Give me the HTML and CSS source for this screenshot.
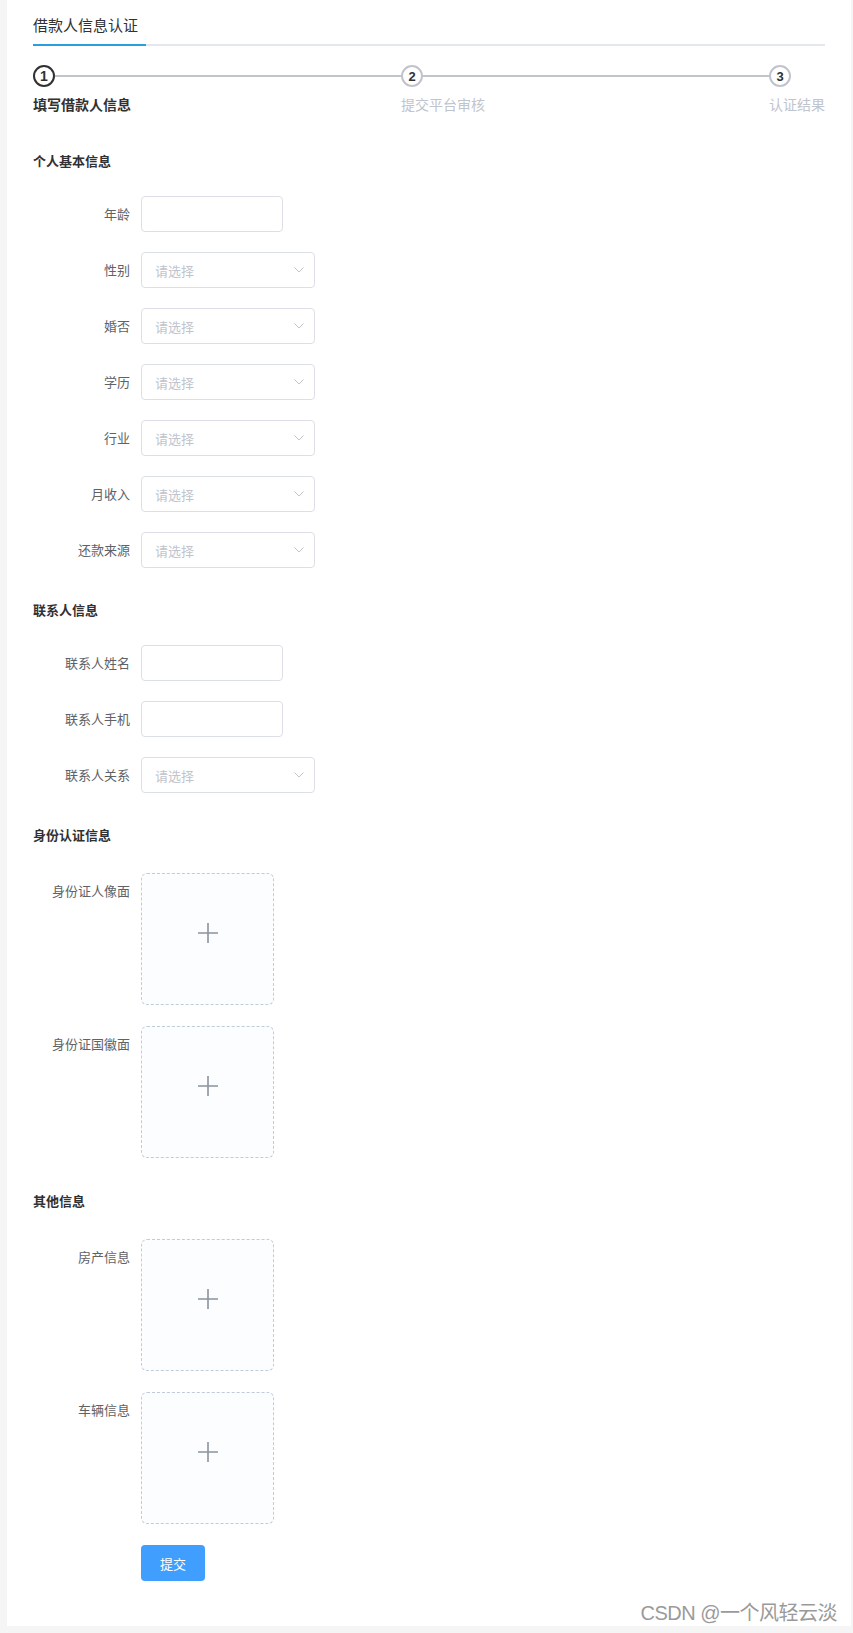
FILE: index.html
```html
<!DOCTYPE html>
<html lang="zh-CN">
<head>
  <meta charset="UTF-8">
  <meta name="viewport" content="width=device-width, initial-scale=1.0">
  <title>借款人信息认证</title>
  <link rel="stylesheet" href="styles.css">
</head>
<body>

<div class="page">
  <!-- Tabs -->
  <div class="tabs">
    <div class="tab active">借款人信息认证</div>
  </div>

  <!-- Steps -->
  <div class="steps">
    <div class="step is-process">
      <div class="step-head">
        <div class="step-icon">1</div>
        <div class="step-line"></div>
      </div>
      <div class="step-title">填写借款人信息</div>
    </div>
    <div class="step">
      <div class="step-head">
        <div class="step-icon">2</div>
        <div class="step-line"></div>
      </div>
      <div class="step-title">提交平台审核</div>
    </div>
    <div class="step">
      <div class="step-head">
        <div class="step-icon">3</div>
      </div>
      <div class="step-title">认证结果</div>
    </div>
  </div>

  <form class="form">
    <!-- 个人基本信息 -->
    <h3 class="section-title">个人基本信息</h3>
    <div class="form-item">
      <label class="form-label">年龄</label>
      <input type="text" class="input">
    </div>
    <div class="form-item">
      <label class="form-label">性别</label>
      <div class="select"><span>请选择</span><svg width="10" height="6" viewBox="0 0 10 6"><polyline points="0.5,0.5 5,5 9.5,0.5" fill="none" stroke="#c0c4cc" stroke-width="1"/></svg></div>
    </div>
    <div class="form-item">
      <label class="form-label">婚否</label>
      <div class="select"><span>请选择</span><svg width="10" height="6" viewBox="0 0 10 6"><polyline points="0.5,0.5 5,5 9.5,0.5" fill="none" stroke="#c0c4cc" stroke-width="1"/></svg></div>
    </div>
    <div class="form-item">
      <label class="form-label">学历</label>
      <div class="select"><span>请选择</span><svg width="10" height="6" viewBox="0 0 10 6"><polyline points="0.5,0.5 5,5 9.5,0.5" fill="none" stroke="#c0c4cc" stroke-width="1"/></svg></div>
    </div>
    <div class="form-item">
      <label class="form-label">行业</label>
      <div class="select"><span>请选择</span><svg width="10" height="6" viewBox="0 0 10 6"><polyline points="0.5,0.5 5,5 9.5,0.5" fill="none" stroke="#c0c4cc" stroke-width="1"/></svg></div>
    </div>
    <div class="form-item">
      <label class="form-label">月收入</label>
      <div class="select"><span>请选择</span><svg width="10" height="6" viewBox="0 0 10 6"><polyline points="0.5,0.5 5,5 9.5,0.5" fill="none" stroke="#c0c4cc" stroke-width="1"/></svg></div>
    </div>
    <div class="form-item">
      <label class="form-label">还款来源</label>
      <div class="select"><span>请选择</span><svg width="10" height="6" viewBox="0 0 10 6"><polyline points="0.5,0.5 5,5 9.5,0.5" fill="none" stroke="#c0c4cc" stroke-width="1"/></svg></div>
    </div>

    <!-- 联系人信息 -->
    <h3 class="section-title">联系人信息</h3>
    <div class="form-item">
      <label class="form-label">联系人姓名</label>
      <input type="text" class="input">
    </div>
    <div class="form-item">
      <label class="form-label">联系人手机</label>
      <input type="text" class="input">
    </div>
    <div class="form-item">
      <label class="form-label">联系人关系</label>
      <div class="select"><span>请选择</span><svg width="10" height="6" viewBox="0 0 10 6"><polyline points="0.5,0.5 5,5 9.5,0.5" fill="none" stroke="#c0c4cc" stroke-width="1"/></svg></div>
    </div>

    <!-- 身份认证信息 -->
    <h3 class="section-title">身份认证信息</h3>
    <div class="form-item upload-item">
      <label class="form-label">身份证人像面</label>
      <div class="upload"><svg width="22" height="22" viewBox="0 0 22 22"><path d="M11 1V21M1 11H21" stroke="#8c939d" stroke-width="1.6"/></svg></div>
    </div>
    <div class="form-item upload-item">
      <label class="form-label">身份证国徽面</label>
      <div class="upload"><svg width="22" height="22" viewBox="0 0 22 22"><path d="M11 1V21M1 11H21" stroke="#8c939d" stroke-width="1.6"/></svg></div>
    </div>

    <!-- 其他信息 -->
    <h3 class="section-title">其他信息</h3>
    <div class="form-item upload-item">
      <label class="form-label">房产信息</label>
      <div class="upload"><svg width="22" height="22" viewBox="0 0 22 22"><path d="M11 1V21M1 11H21" stroke="#8c939d" stroke-width="1.6"/></svg></div>
    </div>
    <div class="form-item upload-item">
      <label class="form-label">车辆信息</label>
      <div class="upload"><svg width="22" height="22" viewBox="0 0 22 22"><path d="M11 1V21M1 11H21" stroke="#8c939d" stroke-width="1.6"/></svg></div>
    </div>

    <div class="form-item">
      <span class="form-label"></span>
      <button type="button" class="btn-primary">提交</button>
    </div>
  </form>

  <div class="watermark">CSDN @一个风轻云淡</div>
</div>

</body>
</html>
```

FILE: styles.css
```css
/* General Reset */
* {
    margin: 0;
    padding: 0;
    box-sizing: border-box;
}

body {
    font-family: "Noto Sans CJK SC", "Noto Sans", sans-serif;
    background-color: #f5f5f5;
    color: #303133;
}

.page {
    position: relative;
    background-color: #ffffff;
    margin: 0 2px 8px 7px;
    padding: 6px 26px 45px 26px;
}

/* Tabs */
.tabs {
    display: flex;
    border-bottom: 2px solid #e4e7ed;
}

.tab {
    font-size: 15px;
    line-height: 38px;
    padding-right: 8px;
    color: #303133;
    margin-bottom: -2px;
}

.tab.active {
    border-bottom: 2px solid #2a9fe0;
}

/* Steps */
.steps {
    display: flex;
    margin-top: 19px;
    margin-bottom: 25px;
}

.step {
    flex: 0 1 50%;
}

.step:last-child {
    flex: 0 0 auto;
}

.step-head {
    display: flex;
    align-items: center;
    height: 22px;
}

.step-icon {
    width: 22px;
    height: 22px;
    flex-shrink: 0;
    border: 2px solid #c0c4cc;
    border-radius: 50%;
    display: flex;
    align-items: center;
    justify-content: center;
    font-family: "Liberation Sans", "Noto Sans", sans-serif;
    font-size: 13px;
    font-weight: bold;
    color: #303133;
}

.step-line {
    flex: 1;
    height: 2px;
    background-color: #c0c4cc;
}

.step-title {
    margin-top: 7px;
    font-size: 14px;
    line-height: 20px;
    color: #c0c4cc;
    white-space: nowrap;
}

.is-process .step-icon {
    border-color: #303133;
    font-size: 14px;
}

.is-process .step-title {
    color: #303133;
    font-weight: bold;
}

/* Form */
.form {
    display: flex;
    flex-direction: column;
}

.section-title {
    font-size: 13px;
    font-weight: bold;
    line-height: 20px;
    color: #303133;
    margin: 12px 0 25px;
}

.form-item {
    display: flex;
    align-items: flex-start;
    margin-bottom: 20px;
}

.form-item:last-child {
    margin-bottom: 0;
}

.form-label {
    width: 108px;
    flex-shrink: 0;
    padding-right: 11px;
    text-align: right;
    font-size: 13px;
    line-height: 36px;
    color: #606266;
}

.input {
    width: 142px;
    height: 36px;
    border: 1px solid #dcdfe6;
    border-radius: 4px;
    padding: 0 13px;
    font-size: 13px;
    outline: none;
}

.select {
    width: 174px;
    height: 36px;
    border: 1px solid #dcdfe6;
    border-radius: 4px;
    padding: 0 10px 0 13px;
    display: flex;
    align-items: center;
    justify-content: space-between;
    font-size: 13px;
    color: #c0c4cc;
}

.upload-item {
    margin-bottom: 21px;
}

.section-title + .upload-item {
    margin-top: 3px;
}

.upload {
    width: 133px;
    height: 132px;
    border: 1px dashed #c0ccda;
    border-radius: 6px;
    background-color: #fbfdff;
    display: flex;
    align-items: center;
    justify-content: center;
    padding-bottom: 12px;
}

.btn-primary {
    height: 36px;
    padding: 0 19px;
    border: none;
    border-radius: 4px;
    background-color: #409eff;
    color: #ffffff;
    font-family: inherit;
    font-size: 13px;
    cursor: pointer;
}

.btn-primary:hover {
    background-color: #66b1ff;
}

/* CSDN watermark */
.watermark {
    position: absolute;
    right: 14px;
    bottom: 0;
    line-height: 26px;
    font-family: "Liberation Sans", "Noto Sans CJK SC", sans-serif;
    font-size: 20px;
    color: #9a9a9a;
    letter-spacing: -0.5px;
}
```
